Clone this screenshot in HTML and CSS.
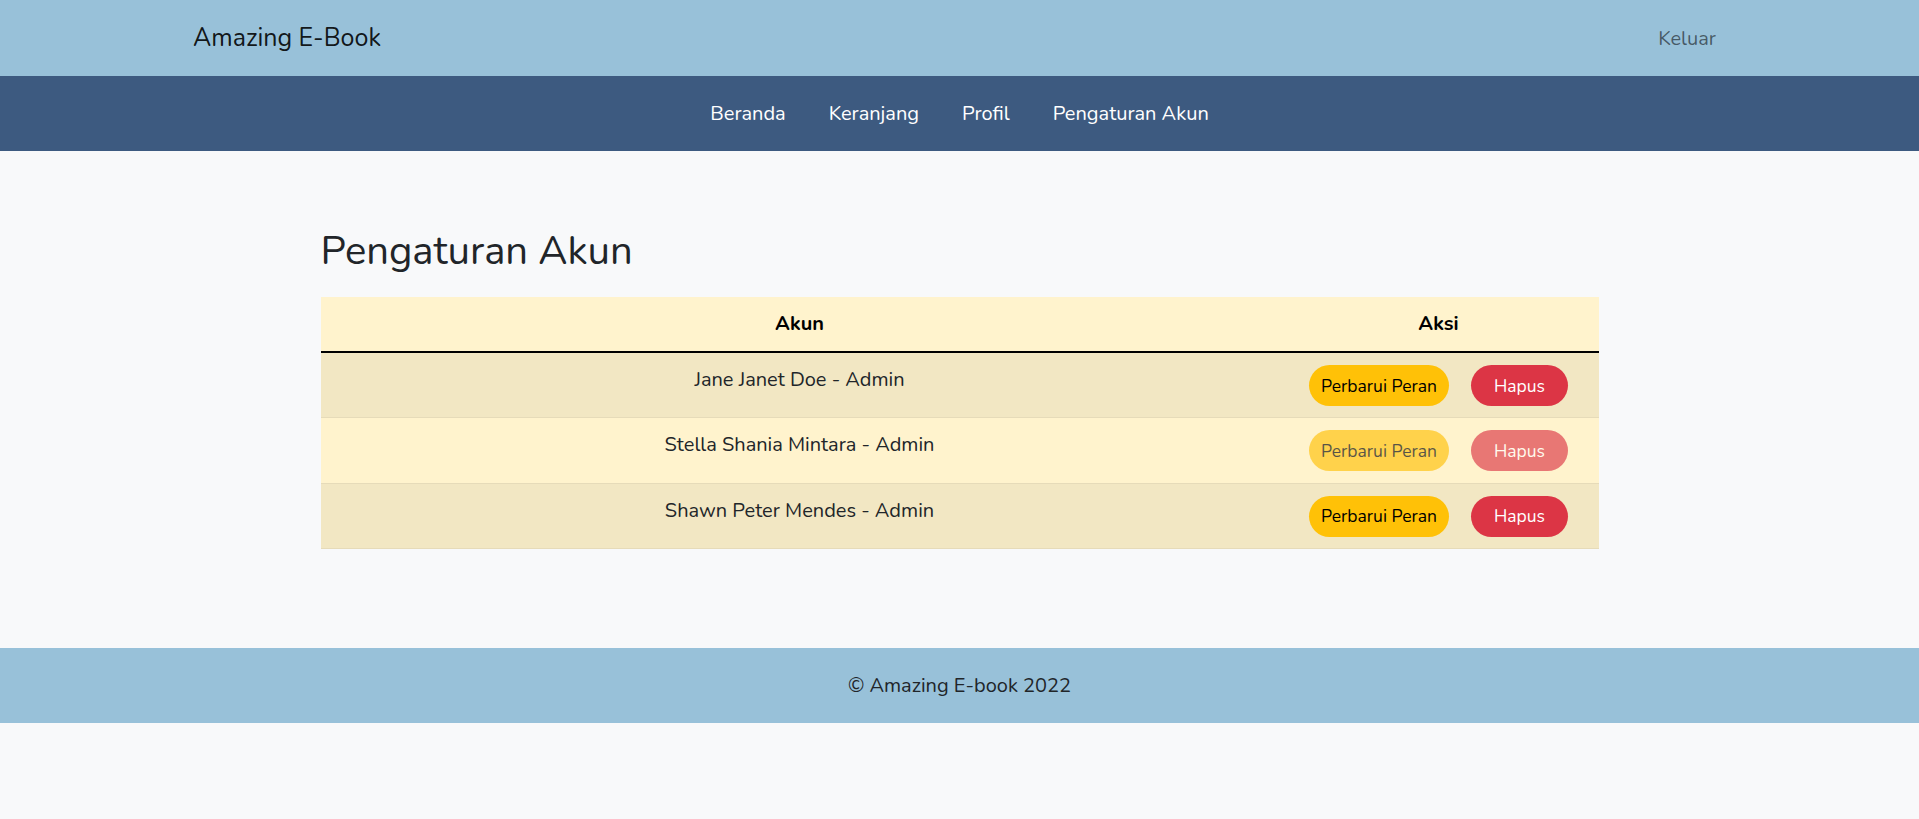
FILE: index.html
```html
<!DOCTYPE html>
<html lang="id">
<head>
<meta charset="utf-8">
<title>Amazing E-Book</title>
<link rel="stylesheet" href="styles.css">
</head>
<body>
<header class="topbar">
  <a class="brand" href="#">Amazing E-Book</a>
  <a class="logout" href="#">Keluar</a>
</header>
<nav class="mainnav">
  <a href="#">Beranda</a>
  <a href="#">Keranjang</a>
  <a href="#">Profil</a>
  <a href="#">Pengaturan Akun</a>
</nav>
<main class="content">
  <h2 class="page-title">Pengaturan Akun</h2>
  <table class="accounts">
    <colgroup><col class="col-name"><col class="col-action"></colgroup>
    <thead>
      <tr><th>Akun</th><th>Aksi</th></tr>
    </thead>
    <tbody>
      <tr>
        <td class="name">Jane Janet Doe - Admin</td>
        <td class="actions"><div class="btns"><button class="btn warn">Perbarui Peran</button><button class="btn danger">Hapus</button></div></td>
      </tr>
      <tr class="disabled">
        <td class="name">Stella Shania Mintara - Admin</td>
        <td class="actions"><div class="btns"><button class="btn warn">Perbarui Peran</button><button class="btn danger">Hapus</button></div></td>
      </tr>
      <tr>
        <td class="name">Shawn Peter Mendes - Admin</td>
        <td class="actions"><div class="btns"><button class="btn warn">Perbarui Peran</button><button class="btn danger">Hapus</button></div></td>
      </tr>
    </tbody>
  </table>
</main>
<footer class="footer">© Amazing E-book 2022</footer>
</body>
</html>
```
FILE: styles.css
```css
* { box-sizing: border-box; }
html, body { margin: 0; padding: 0; }
body {
  background: #f8f9fa;
  font-family: "Nunito", "Lato", "Noto Sans", sans-serif;
  color: #212529;
  font-size: 20px;
}
a { text-decoration: none; }

.topbar {
  height: 76px;
  background: #98c1d9;
  display: flex;
  align-items: center;
  justify-content: space-between;
  padding: 0 203px 0 193px;
}
.brand {
  font-size: 25px;
  color: rgba(0,0,0,.9);
}
.logout {
  font-size: 20px;
  color: rgba(0,0,0,.55);
}

.mainnav {
  height: 75px;
  background: #3d5a80;
  display: flex;
  align-items: center;
  justify-content: center;
  gap: 43px;
}
.mainnav a {
  color: #fff;
  font-size: 20px;
}

.content {
  max-width: 1278px;
  margin: 0 auto;
  padding: 76px 0 99px;
}
.page-title {
  margin: 0 0 22px;
  font-weight: 400;
  font-size: 40px;
  line-height: 48px;
  color: #212529;
}

.accounts {
  width: 100%;
  border-collapse: collapse;
  color: #000;
}
.col-name { width: 958px; }
.col-action { width: 320px; }
.accounts thead th {
  background: #fff3cd;
  font-weight: 700;
  text-align: center;
  height: 55px;
  padding: 0 10px;
  line-height: 30px;
  border-bottom: 2.5px solid #000;
}
.accounts tbody tr { background: #fff3cd; }
.accounts tbody tr:nth-child(odd) { background: #f2e7c3; }
.accounts td {
  border-bottom: 1.25px solid #e6dbb9;
  padding: 12px 10px 10px;
  vertical-align: top;
  line-height: 30px;
  height: 65.5px;
}
.accounts td.name { text-align: center; color: #212529; }
.btns {
  display: flex;
  justify-content: center;
  gap: 22px;
}
.btn {
  font-family: inherit;
  font-size: 17.5px;
  line-height: 26px;
  height: 41px;
  border: none;
  border-radius: 21px;
  cursor: pointer;
}
.btn.warn {
  width: 140px;
  background: #ffc107;
  color: #000;
}
.btn.danger {
  width: 97px;
  background: #dc3545;
  color: #fff;
}
.disabled .btn { opacity: .65; }

.footer {
  height: 75px;
  background: #98c1d9;
  display: flex;
  align-items: center;
  justify-content: center;
  font-size: 20px;
  color: #212529;
}
```
